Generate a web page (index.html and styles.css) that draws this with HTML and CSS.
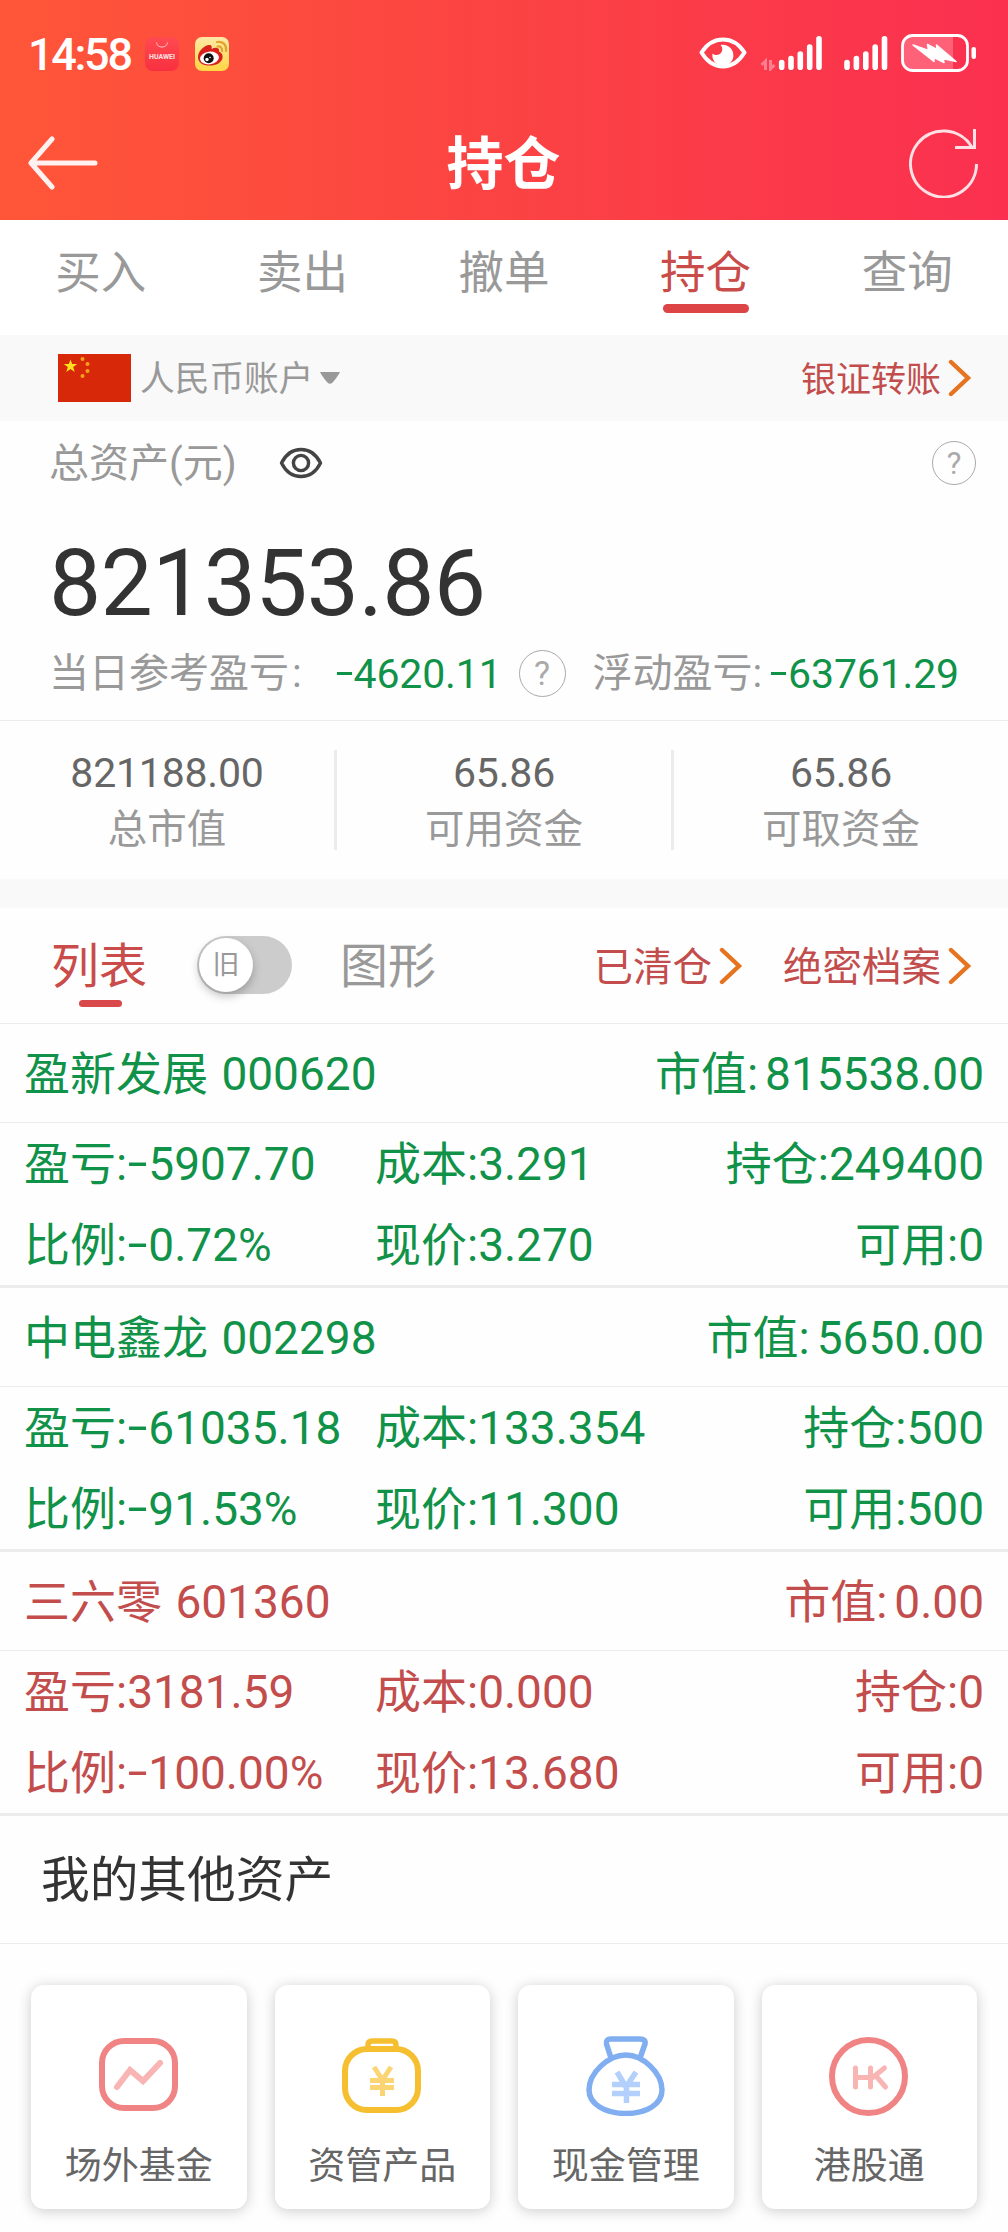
FILE: index.html
```html
<!DOCTYPE html>
<html lang="zh-CN">
<head>
<meta charset="utf-8">
<title>持仓</title>
<link rel="stylesheet" href="styles.css">
</head>
<body>
<header class="top">
  <div class="status">
    <span class="clock">14:58</span>
    <svg class="app-huawei" width="34" height="34" viewBox="0 0 34 34">
      <defs><linearGradient id="hw" x1="0" y1="0" x2="0" y2="1"><stop offset="0" stop-color="#ff4a50"/><stop offset="1" stop-color="#f8303f"/></linearGradient></defs>
      <rect width="34" height="34" rx="8" fill="url(#hw)"/>
      <path d="M11.500 5.500a5.600 5.600 0 0 0 11 0" fill="none" stroke="#ffc4c8" stroke-width="1"/>
      <text x="17" y="22" text-anchor="middle" textLength="26" lengthAdjust="spacingAndGlyphs" class="huawei-word">HUAWEI</text>
    </svg>
    <svg class="app-weibo" width="34" height="34" viewBox="0 0 34 34">
      <defs><linearGradient id="wb" x1="0" y1="0" x2="0" y2="1"><stop offset="0" stop-color="#fde9a6"/><stop offset="1" stop-color="#ffd542"/></linearGradient></defs>
      <rect width="34" height="34" rx="7" fill="url(#wb)"/>
      <path d="M3 20C3 14 10 8 14 8c3 0 3 2 2.500 4C20 10 25 10 24 14.500C27 16 28 18 27.500 21C26.500 26 21 28.500 14.500 28.500S3 26 3 20z" fill="#d8201c"/>
      <ellipse cx="14.500" cy="21" rx="9.500" ry="6.300" fill="#fff" transform="rotate(-8 14.500 21)"/>
      <circle cx="13.700" cy="21.300" r="5" fill="#111"/>
      <circle cx="12" cy="22.500" r="1.700" fill="#fff"/><circle cx="15" cy="20.500" r=".8" fill="#fff"/>
      <path d="M22 5c6-1 10 3 9 9M22.500 9.500c3-.5 5 1.500 4.500 4.500" fill="none" stroke="#dfa62f" stroke-width="2.200" stroke-linecap="round"/>
    </svg>
    <span class="spring"></span>
    <svg class="st-eye" width="48" height="34" viewBox="0 0 48 34">
      <path d="M2.500 16.500C8 8 15 3.500 24 3.500S40 8 45.500 16.500C40 25.500 33 30.500 24 30.500S8 25.500 2.500 16.500z" fill="none" stroke="#fff" stroke-width="4" stroke-linejoin="round"/>
      <path d="M21.500 9a10.500 10.500 0 1 1-8 8.500a5 5 0 0 0 8-8.500z" fill="#fff"/>
    </svg>
    <svg class="st-sig1" width="64" height="36" viewBox="0 0 64 36">
      <g stroke="#ff7f90" stroke-width="3" fill="none"><path d="M6.500 35V26l-4 4M11.500 25v9l4-4"/></g>
      <g stroke="#fff" stroke-width="5.600" stroke-linecap="round"><path d="M22.700 27.500v4.700M32 23.500v8.700M41.300 19v13.200M50.700 12v20.200M60 3.800v28.400"/></g>
    </svg>
    <svg class="st-sig2" width="46" height="36" viewBox="0 0 46 36">
      <g stroke="#fff" stroke-width="5.600" stroke-linecap="round"><path d="M4 27.500v4.700M13.400 23.500v8.700M22.800 19v13.200M32.200 12v20.200M41.500 3.800v28.400"/></g>
    </svg>
    <svg class="st-bat" width="76" height="38" viewBox="0 0 76 38">
      <path d="M10 2.500h42v33H10a8 8 0 0 1-8-8v-17a8 8 0 0 1 8-8z" fill="#ff6278"/>
      <rect x="1.500" y="1.500" width="65" height="35" rx="10" fill="none" stroke="#fff" stroke-width="2.800"/>
      <path d="M12 11l15.500 5.500L26.500 10.500l9.500 5-.5-4.500L55 27.500l-13-3 1 4-10-5v4z" fill="#fff" stroke="#fff" stroke-width="1.500" stroke-linejoin="round"/>
      <rect x="70.500" y="13" width="4.500" height="12" rx="2.200" fill="#fff"/>
    </svg>
  </div>
  <div class="titlebar">
    <svg width="70" height="54" viewBox="0 0 70 54"><path d="M24 3L3 27l21 24M3 27h64" fill="none" stroke="#fff" stroke-opacity=".92" stroke-width="5" stroke-linecap="round" stroke-linejoin="round"/></svg>
    <h1>持仓</h1>
    <svg width="70" height="70" viewBox="0 0 70 70"><path d="M67.500 36A33 33 0 1 1 62.500 18.500M65.500 1v18.500H46" fill="none" stroke="#fff" stroke-opacity=".85" stroke-width="3"/></svg>
  </div>
</header>

<nav class="tabs">
  <span>买入</span><span>卖出</span><span>撤单</span><span class="on">持仓</span><span>查询</span>
</nav>

<div class="account">
  <svg width="73" height="48" viewBox="0 0 73 48">
    <rect width="73" height="48" fill="#d72809"/>
    <path d="M12.500 5.500l1.700 4.500h5l-4 3 1.500 5-4.200-3-4.200 3 1.500-5-4-3h5z" fill="#ffe01e"/>
    <g fill="#f6a11c"><circle cx="24.500" cy="5" r="2"/><circle cx="29.500" cy="10" r="2"/><circle cx="29.500" cy="17" r="2"/><circle cx="24.500" cy="22" r="2"/></g>
  </svg>
  <span class="account-name">人民币账户</span>
  <svg width="20" height="12" viewBox="0 0 20 12"><path d="M0 0h20c-1.500 3-4.500 7-6.500 9.500q-3.500 4.500-7 0C4.500 7 1.500 3 0 0z" fill="#999"/></svg>
  <span class="spring"></span>
  <span class="link">银证转账</span>
  <svg class="chev" width="24" height="38" viewBox="0 0 24 38"><path d="M3 3l17 16L3 35" fill="none" stroke="#e5731f" stroke-width="4.400" stroke-linecap="round"/></svg>
</div>

<section class="assets">
  <div class="assets-head">
    <span class="assets-label">总资产(元)</span>
    <svg width="44" height="32" viewBox="0 0 44 32"><path d="M2.500 16C7 7 13 2.500 22 2.500S37 7 41.500 16C37 25 31 29.500 22 29.500S7 25 2.500 16z" fill="none" stroke="#444" stroke-width="3.400" stroke-linejoin="round"/><circle cx="22" cy="16" r="7.600" fill="none" stroke="#444" stroke-width="3.400"/></svg>
    <span class="spring"></span>
    <span class="help">?</span>
  </div>
  <div class="total">821353.86</div>
  <div class="pl">
    <span class="pl-label">当日参考盈亏<em>:</em></span><b class="pl-day"><i>-</i>4620.11</b><span class="help big">?</span><span class="pl-float">浮动盈亏:</span><b><i>-</i>63761.29</b>
  </div>
</section>

<section class="stats">
  <div><b>821188.00</b><span>总市值</span></div>
  <div><b>65.86</b><span>可用资金</span></div>
  <div><b>65.86</b><span>可取资金</span></div>
</section>

<div class="view">
  <span class="view-on">列表</span>
  <span class="switch"><span>旧</span></span>
  <span class="view-off">图形</span>
  <span class="spring"></span>
  <span class="link lg">已清仓</span>
  <svg class="chev" width="24" height="38" viewBox="0 0 24 38"><path d="M3 3l17 16L3 35" fill="none" stroke="#e5731f" stroke-width="4.400" stroke-linecap="round"/></svg>
  <span class="link lg second">绝密档案</span>
  <svg class="chev" width="24" height="38" viewBox="0 0 24 38"><path d="M3 3l17 16L3 35" fill="none" stroke="#e5731f" stroke-width="4.400" stroke-linecap="round"/></svg>
</div>

<article class="stock down">
  <div class="stock-head"><span>盈新发展 000620</span><span><em>市值:</em>815538.00</span></div>
  <div class="stock-body">
    <span>盈亏:<i>-</i>5907.70</span><span>成本:3.291</span><span>持仓:249400</span>
    <span>比例:<i>-</i>0.72%</span><span>现价:3.270</span><span>可用:0</span>
  </div>
</article>
<article class="stock down">
  <div class="stock-head"><span>中电鑫龙 002298</span><span><em>市值:</em>5650.00</span></div>
  <div class="stock-body">
    <span>盈亏:<i>-</i>61035.18</span><span>成本:133.354</span><span>持仓:500</span>
    <span>比例:<i>-</i>91.53%</span><span>现价:11.300</span><span>可用:500</span>
  </div>
</article>
<article class="stock up">
  <div class="stock-head"><span>三六零 601360</span><span><em>市值:</em>0.00</span></div>
  <div class="stock-body">
    <span>盈亏:3181.59</span><span>成本:0.000</span><span>持仓:0</span>
    <span>比例:<i>-</i>100.00%</span><span>现价:13.680</span><span>可用:0</span>
  </div>
</article>

<h2>我的其他资产</h2>
<section class="cards">
  <div class="card">
    <svg width="80" height="80" viewBox="0 0 80 80"><rect x="3" y="5" width="73" height="67" rx="22" fill="none" stroke="#f08484" stroke-width="6"/><path d="M18 51l13-17 13 11 17-18" fill="none" stroke="#f9b4b4" stroke-width="6" stroke-linecap="round" stroke-linejoin="miter"/></svg>
    <span>场外基金</span>
  </div>
  <div class="card">
    <svg width="80" height="80" viewBox="0 0 80 80"><rect x="3" y="13" width="73" height="61" rx="22" fill="none" stroke="#f5bf30" stroke-width="6"/><path d="M26 13V9q0-4 4-4h20q4 0 4 4v4" fill="none" stroke="#f5bf30" stroke-width="5.500"/><path d="M32 31l8.500 13L49 31M28 44.500h24M28 51.500h24M40.500 43v17" fill="none" stroke="#fbd573" stroke-width="5"/></svg>
    <span>资管产品</span>
  </div>
  <div class="card">
    <svg width="80" height="80" viewBox="0 0 80 80"><path d="M25 22L20.500 8Q19.500 3 25 3h29q6 0 5 5L54 22" fill="none" stroke="#80aef0" stroke-width="5.500"/><path d="M40 19C22 19 3 37 3 54c0 14 16 23.500 37 23.500S76 68 76 54C76 37 57 19 40 19z" fill="none" stroke="#80aef0" stroke-width="5.500"/><path d="M31 36l9 15 10-15M26 48.500h28M26 57.500h28M40.500 48v19" fill="none" stroke="#b3cffb" stroke-width="5.500"/></svg>
    <span>现金管理</span>
  </div>
  <div class="card">
    <svg width="80" height="80" viewBox="0 0 80 80"><circle cx="39.500" cy="40.500" r="36.500" fill="none" stroke="#f08484" stroke-width="6"/><path d="M26.500 32v19M41.500 32v19M26.500 41.500h15M55.500 32L43 42M47 40l9.500 11" fill="none" stroke="#f9b4b4" stroke-width="5" stroke-linecap="round"/></svg>
    <span>港股通</span>
  </div>
</section>
</body>
</html>
```
FILE: styles.css
```css
* { box-sizing: border-box; }
body {
  margin: 0;
  width: 1008px;
  height: 2232px;
  overflow: hidden;
  background: #fefefe;
  color: #999;
  font-family: Roboto, "Noto Sans CJK SC", sans-serif;
  font-weight: 400;
}
svg { display: block; flex: none; }
span, b, h1, h2 { white-space: nowrap; }
b, em, i { font-weight: 400; font-style: normal; }
.spring { flex: 1; }

.top { height: 220px; background: linear-gradient(90deg, #ff5638, #fb4343 50%, #fb3050); color: #fff; }
.status { display: flex; align-items: flex-start; height: 110px; padding: 34px 31px 0 28px; }
.clock { width: 105px; margin-right: 12px; font-size: 45px; font-weight: 500; line-height: 42px; letter-spacing: -2.300px; }
.app-huawei { margin: 3px 16px 0 0; }
.app-weibo { margin-top: 3px; }
.huawei-word { font-size: 6.500px; font-weight: 700; fill: #ffe3e3; }
.st-eye { margin-top: 2px; }
.st-sig1 { margin: 1px 20px 0 12px; }
.st-sig2 { margin: 1px 12px 0 0; }
.titlebar { display: flex; align-items: center; justify-content: space-between; height: 110px; padding: 0 29px 4px 28px; }
h1 { margin: 4px 0 0; font-size: 57px; font-weight: 700; line-height: 80px; }

.tabs { display: grid; grid-template-columns: repeat(5, 1fr); height: 115px; background: #fff; }
.tabs span { display: flex; flex-direction: column; align-items: center; font-size: 45.500px; line-height: 84px; padding-top: 12px; }
.tabs .on { color: #c94c4a; }
.tabs .on::after { content: ""; width: 86px; height: 9px; border-radius: 5px; background: #dc4446; margin-top: -12px; }

.account { display: flex; align-items: center; height: 86px; padding: 0 36px 0 58px; background: #f9f9f9; font-size: 34.700px; }
.account-name { margin: -4px 7px 0 9px; }
.link { margin-top: -4px; color: #c24d4c; font-size: 35px; }
.link.lg { font-size: 39.500px; }
.chev { margin-left: 7px; }

.assets { height: 300px; border-bottom: 1px solid #ececec; padding: 0 32px 0 49px; }
.assets-head { display: flex; align-items: center; height: 83px; font-size: 40px; gap: 42px; }
.assets-label { margin-top: -5px; }
.help { width: 44px; height: 44px; border: 1.500px solid #aaa; border-radius: 50%; color: #aaa; font-size: 31px; line-height: 43px; text-align: center; }
.help.big { width: 47px; height: 47px; margin-top: -2px; font-size: 34px; line-height: 45px; }
.total { height: 130px; line-height: 160px; font-size: 93px; color: #333; letter-spacing: -.700px; }
.pl { display: flex; align-items: center; height: 76px; font-size: 40px; line-height: 60px; margin-top: 2px; }
.pl b { color: #109249; font-size: 41px; letter-spacing: -.150px; }
.pl-label em { margin-left: 3px; }
.pl-day { margin-left: 33px; margin-right: 17px; }
.pl-float { margin-left: 27px; margin-right: 7px; }
i { display: inline-block; width: .46em; text-align: center; transform: translateY(-.05em) scaleX(1.550); }

.stats { display: grid; grid-template-columns: 337px 337px 334px; height: 158px; padding: 29px 0; }
.stats div { display: flex; flex-direction: column; align-items: center; border-right: 3px solid #ececec; height: 100px; }
.stats div:last-child { border-right: 0; }
.stats b { font-size: 41px; line-height: 46px; color: #666; letter-spacing: -.200px; }
.stats span { margin-top: 4px; font-size: 39.500px; line-height: 60px; }

.view { display: flex; align-items: center; height: 145px; border-top: 29px solid #f9f9f9; border-bottom: 1px solid #ececec; padding: 0 36px 0 51px; }
.view-on, .view-off { margin-top: -8px; font-size: 48px; }
.view-on { position: relative; color: #c94c4a; }
.view-on::after { content: ""; position: absolute; left: 28px; bottom: -10px; width: 43px; height: 7px; border-radius: 4px; background: #d9484a; }
.switch { width: 95px; height: 58px; margin: -1px 48px 0 50px; padding: 2px; border-radius: 29px; background: #ccc; }
.switch span { display: block; width: 54px; height: 54px; border-radius: 50%; background: #fff; box-shadow: 0 4px 10px rgba(0,0,0,.25); font-size: 27px; line-height: 54px; text-align: center; }
.second { margin-left: 40px; }

.stock { height: 264px; border-bottom: 3px solid #ececec; font-size: 46px; }
.down { color: #109249; }
.up { color: #c24d4c; }
.stock-head { display: flex; justify-content: space-between; height: 99px; padding: 2px 24px 0 24px; line-height: 96px; border-bottom: 1px solid #ececec; word-spacing: 2px; }
.stock-head em { margin-right: 7px; }
.stock-body { display: grid; grid-template-columns: 351px 1fr 1fr; grid-auto-rows: 81px; padding: 1px 24px 0 24px; line-height: 81px; height: 162px; }
.stock-body span:nth-child(3n) { text-align: right; }

h2 { margin: 0; height: 128px; padding-left: 41px; border-bottom: 1px solid #ececec; color: #333; font-size: 48.700px; font-weight: 400; line-height: 130px; }
.cards { display: grid; grid-template-columns: repeat(4, 1fr); gap: 28px; padding: 41px 31px 0; }
.card { display: flex; flex-direction: column; align-items: center; height: 224px; padding-top: 51px; border-radius: 13px; background: #fff; box-shadow: 0 2px 14px rgba(0,0,0,.2); color: #666; }
.card span { font-size: 37px; line-height: 50px; margin-top: 26px; }
```
